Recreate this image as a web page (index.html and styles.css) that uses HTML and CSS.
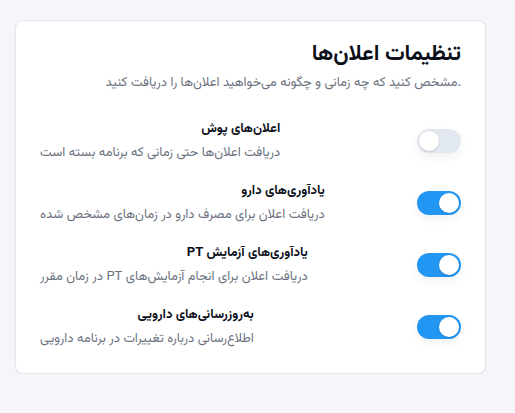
FILE: index.html
```html
<!DOCTYPE html>
<html lang="fa">
<head>
<meta charset="utf-8">
<title>تنظیمات اعلان‌ها</title>
<link rel="stylesheet" href="styles.css">
</head>
<body>
<section class="card">
  <header class="card-header">
    <h1 class="card-title">تنظیمات اعلان‌ها</h1>
    <p class="card-subtitle">مشخص کنید که چه زمانی و چگونه می‌خواهید اعلان‌ها را دریافت کنید.</p>
  </header>
  <div class="settings">
    <div class="setting">
      <div class="setting-text">
        <div class="setting-title">اعلان‌های پوش</div>
        <div class="setting-desc">دریافت اعلان‌ها حتی زمانی که برنامه بسته است</div>
      </div>
      <span class="switch" role="switch" aria-checked="false"><span class="knob"></span></span>
    </div>
    <div class="setting">
      <div class="setting-text">
        <div class="setting-title">یادآوری‌های دارو</div>
        <div class="setting-desc">دریافت اعلان برای مصرف دارو در زمان‌های مشخص شده</div>
      </div>
      <span class="switch on" role="switch" aria-checked="true"><span class="knob"></span></span>
    </div>
    <div class="setting">
      <div class="setting-text">
        <div class="setting-title">یادآوری‌های آزمایش PT</div>
        <div class="setting-desc">دریافت اعلان برای انجام آزمایش‌های PT در زمان مقرر</div>
      </div>
      <span class="switch on" role="switch" aria-checked="true"><span class="knob"></span></span>
    </div>
    <div class="setting">
      <div class="setting-text">
        <div class="setting-title">به‌روزرسانی‌های دارویی</div>
        <div class="setting-desc">اطلاع‌رسانی درباره تغییرات در برنامه دارویی</div>
      </div>
      <span class="switch on" role="switch" aria-checked="true"><span class="knob"></span></span>
    </div>
  </div>
</section>
</body>
</html>
```

FILE: styles.css
```css
* {
  box-sizing: border-box;
}

html, body {
  margin: 0;
  padding: 0;
}

body {
  background: #f5f6f9;
  font-family: Vazirmatn, Inter, "Noto Sans Arabic", "DejaVu Sans", sans-serif;
  color: #111827;
}

.card {
  margin: 20px 0 0 15px;
  width: 471px;
  background: #ffffff;
  border: 1px solid #e3e7ec;
  border-radius: 8px;
  box-shadow: 0 1px 2px rgba(15, 23, 42, 0.05);
  padding: 20px 24px 24px;
}

.card-header {
  text-align: right;
}

.card-title {
  margin: 0;
  font-size: 22px;
  line-height: 28px;
  font-weight: 700;
  color: #0b0f19;
}

.card-subtitle {
  margin: 4px 0 0;
  font-size: 13px;
  line-height: 20px;
  color: #6b7280;
}

.settings {
  margin-top: 26px;
  display: flex;
  flex-direction: column;
  gap: 18px;
}

.setting {
  display: flex;
  justify-content: space-between;
  align-items: center;
}

.setting-text {
  direction: rtl;
  text-align: right;
  display: flex;
  flex-direction: column;
  gap: 4px;
}

.setting-title {
  font-size: 13px;
  line-height: 20px;
  font-weight: 700;
  color: #0b0f19;
}

.setting-desc {
  font-size: 13px;
  line-height: 20px;
  color: #6b7280;
}

.switch {
  flex: none;
  width: 44px;
  height: 24px;
  border-radius: 12px;
  background: #e2e8f0;
  padding: 2px;
  display: flex;
  justify-content: flex-start;
  box-shadow: 0 4px 10px rgba(15, 23, 42, 0.06);
}

.switch.on {
  background: #2196f3;
  justify-content: flex-end;
}

.knob {
  width: 20px;
  height: 20px;
  border-radius: 50%;
  background: #ffffff;
  box-shadow: 0 1px 2px rgba(15, 23, 42, 0.15);
}
```
